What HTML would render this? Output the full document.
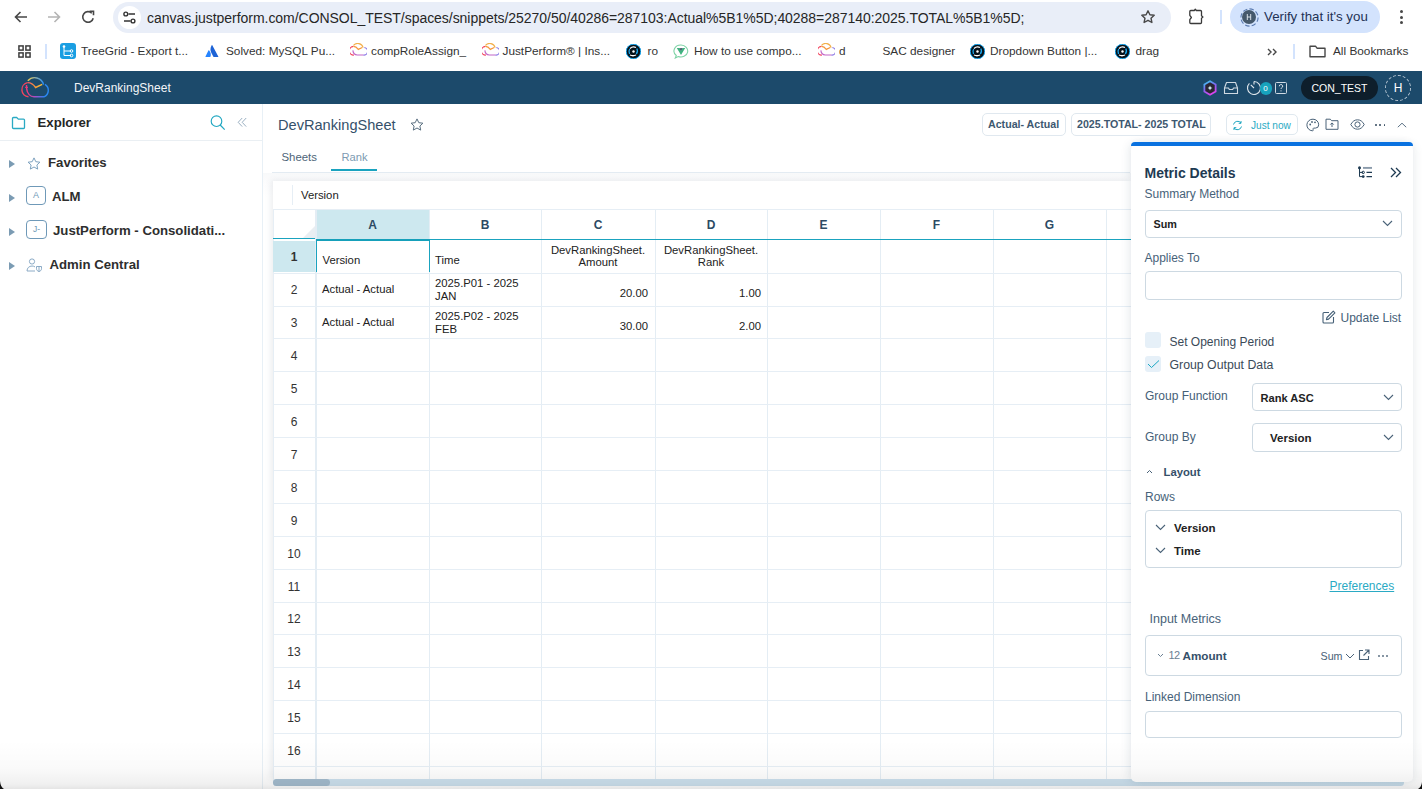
<!DOCTYPE html>
<html><head><meta charset="utf-8">
<style>
*{box-sizing:border-box;margin:0;padding:0}
html,body{width:1422px;height:789px;overflow:hidden;background:#fff;font-family:"Liberation Sans",sans-serif;color:#222}
.a{position:absolute;white-space:nowrap}
#chrome{position:absolute;left:0;top:0;width:1422px;height:71px;background:#fff}
#url{position:absolute;left:113px;top:1.5px;width:1058px;height:31px;border-radius:16px;background:#e9eef8}
#urltxt{left:147px;top:9.5px;font-size:14px;color:#262626;letter-spacing:-0.04px}
.bm{font-size:11.8px;color:#333;top:43.8px}
#hdr{position:absolute;left:0;top:71px;width:1422px;height:33px;background:#1c4a6b}
#side{position:absolute;left:0;top:104px;width:263px;height:685px;background:#fff;border-right:1px solid #e8f0f6}
.tri{position:absolute;width:0;height:0;border-top:4.8px solid transparent;border-bottom:4.8px solid transparent;border-left:6.3px solid #7b9bb3}
.tree{font-size:13.2px;font-weight:700;color:#2e2e2e}
#main{position:absolute;left:263px;top:104px;width:1159px;height:685px;background:#fff}
#grid{position:absolute;left:273px;top:181px;width:858px;height:600px;background:#fff}
.gtxt{font-size:11.3px;color:#222}
.colh{position:absolute;top:211px;height:29px;font-size:12px;font-weight:700;color:#2d4a64;text-align:center;line-height:29px}
.rowh{position:absolute;left:273px;width:42px;font-size:12px;color:#333;text-align:center}
#panel{position:absolute;left:1130.5px;top:142px;width:282px;height:640px;background:#fff;border-radius:8px 8px 5px 5px;box-shadow:-3px 0 8px rgba(30,60,90,0.08), 3px 0 8px rgba(30,60,90,0.06)}
.plab{font-size:12px;color:#476279}
.box{position:absolute;border:1px solid #cdd9e2;border-radius:4px;background:#fff}
.sel{font-size:12.5px;font-weight:700;color:#222}
</style></head><body>
<div id="chrome">
  <svg class="a" style="left:13px;top:9px" width="16" height="16" viewBox="0 0 16 16"><path d="M14 8H2.5M7.5 3L2.5 8l5 5" fill="none" stroke="#474747" stroke-width="1.6"/></svg>
  <svg class="a" style="left:46px;top:9px" width="16" height="16" viewBox="0 0 16 16"><path d="M2 8h11.5M8.5 3l5 5-5 5" fill="none" stroke="#b4b4b4" stroke-width="1.6"/></svg>
  <svg class="a" style="left:80px;top:9px" width="16" height="16" viewBox="0 0 16 16"><path d="M13.2 9.2A5.3 5.3 0 1 1 11.8 4.2" fill="none" stroke="#474747" stroke-width="1.6"/><path d="M9.5 2.2h4v4" fill="none" stroke="#474747" stroke-width="1.6"/></svg>
  <div id="url"></div>
  <div class="a" style="left:117.5px;top:5.5px;width:23px;height:23px;border-radius:12px;background:#fff"></div>
  <svg class="a" style="left:122px;top:10px" width="15" height="15" viewBox="0 0 15 15"><circle cx="3.8" cy="4" r="1.9" fill="none" stroke="#333" stroke-width="1.4"/><path d="M6.5 4H13M2 11h6.5" stroke="#333" stroke-width="1.4"/><circle cx="11" cy="11" r="1.9" fill="none" stroke="#333" stroke-width="1.4"/></svg>
  <div class="a" id="urltxt">canvas.justperform.com/CONSOL_TEST/spaces/snippets/25270/50/40286=287103:Actual%5B1%5D;40288=287140:2025.TOTAL%5B1%5D;</div>
  <svg class="a" style="left:1140px;top:9px" width="16" height="16" viewBox="0 0 16 16"><path d="M8 1.8l1.9 4 4.3.5-3.2 2.9.9 4.3L8 11.3l-3.9 2.2.9-4.3L1.8 6.3l4.3-.5z" fill="none" stroke="#474747" stroke-width="1.4" stroke-linejoin="round"/></svg>
  <svg class="a" style="left:1188px;top:8px" width="18" height="17" viewBox="0 0 18 17"><path d="M2.8 2.5H6.3L7.3 1.2 8.3 2.5h4.2a1 1 0 0 1 1 1v4.3l1.4 1.2-1.4 1.2v4.3a1 1 0 0 1-1 1H2.8a1 1 0 0 1-1-1v-2.8l1.6-2.2-1.6-2.2V3.5a1 1 0 0 1 1-1z" fill="none" stroke="#3a3a3a" stroke-width="1.3" stroke-linejoin="round"/></svg>
  <div class="a" style="left:1220px;top:9.5px;width:2px;height:14.5px;background:#d3e3fd"></div>
  <div class="a" style="left:1230px;top:1px;width:150px;height:32px;border-radius:16px;background:#d3e3fd"></div>
  <svg class="a" style="left:1239.5px;top:7.5px" width="19" height="19" viewBox="0 0 19 19"><circle cx="9.5" cy="9.5" r="8.6" fill="none" stroke="#5b7bb0" stroke-width="1.1" stroke-dasharray="4.5 2.2"/></svg>
  <div class="a" style="left:1242.3px;top:10.3px;width:13.4px;height:13.4px;border-radius:7px;background:#46596b;"></div>
  <svg class="a" style="left:1242.3px;top:10.3px" width="14" height="14" viewBox="0 0 14 14"><path d="M5.3 4v6M8.7 4v6M5.3 7h3.4" stroke="#e8eef4" stroke-width="0.9"/></svg>
  <div class="a" style="left:1264px;top:9px;font-size:13.3px;color:#1f3255">Verify that it's you</div>
  <div class="a" style="left:1399.5px;top:10px;width:3px;height:3px;border-radius:2px;background:#474747"></div>
  <div class="a" style="left:1399.5px;top:15.5px;width:3px;height:3px;border-radius:2px;background:#474747"></div>
  <div class="a" style="left:1399.5px;top:21px;width:3px;height:3px;border-radius:2px;background:#474747"></div>
  <!-- bookmarks -->
  <svg class="a" style="left:18px;top:45px" width="13" height="13" viewBox="0 0 14 14"><g fill="none" stroke="#3c3c3c" stroke-width="1.6"><rect x="1" y="1" width="4.5" height="4.5"/><rect x="8.5" y="1" width="4.5" height="4.5"/><rect x="1" y="8.5" width="4.5" height="4.5"/><rect x="8.5" y="8.5" width="4.5" height="4.5"/></g></svg>
  <div class="a" style="left:45px;top:44px;width:2px;height:15px;background:#d3e3fd"></div>
  <svg class="a" style="left:59.5px;top:43px" width="16" height="16" viewBox="0 0 16 16"><rect width="16" height="16" rx="3" fill="#1a9ee2"/><path d="M4 3.5v9h7M4 8h7" fill="none" stroke="#fff" stroke-width="1"/><circle cx="4" cy="3.5" r="1.3" fill="#fff"/><circle cx="11.5" cy="8" r="1.3" fill="none" stroke="#fff"/><circle cx="11.5" cy="12.5" r="1.3" fill="none" stroke="#fff"/></svg>
  <div class="a bm" style="left:81px">TreeGrid - Export t...</div>
  <svg class="a" style="left:205px;top:44px" width="14" height="14" viewBox="0 0 14 14"><path d="M4.2 6.5c-.3-.3-.6-.3-.8.1L.5 12.5c-.2.3 0 .6.3.6h4.1c.2 0 .4-.1.5-.3.9-1.9.4-4.7-1.2-6.3z" fill="#2684ff"/><path d="M6.7 1.2c-1.6 2.6-1.5 5.4-.4 7.6l2.1 4c.1.2.3.3.5.3h4.1c.3 0 .5-.3.3-.6L7.3 1.2c-.1-.3-.5-.3-.6 0z" fill="#1d63d6"/></svg>
  <div class="a bm" style="left:226px">Solved: MySQL Pu...</div>
  <svg class="a cloud" style="left:349.5px;top:43px" width="17" height="14" viewBox="6 4 28 21"><path d="M12.5 22.8A7 7 0 0 1 11.5 8.6" fill="none" stroke="#f2445e" stroke-width="1.9"/><path d="M11.5 8.6C15 8.5 17.6 10.6 19.6 13.5L26.2 10.3" fill="none" stroke="#f5963a" stroke-width="1.9"/><path d="M11.8 6.8A9.2 9.2 0 0 1 27.6 10.6" fill="none" stroke="#f2b04c" stroke-width="1.9"/><path d="M29.6 10.4A6.2 6.2 0 0 1 28 22.8" fill="none" stroke="#8a7ae6" stroke-width="1.9"/><path d="M28.2 22.8H18C14.2 22.8 11.2 19.5 10.7 15.2" fill="none" stroke="#c266c8" stroke-width="1.9"/></svg>
  <div class="a bm" style="left:371px">compRoleAssign_</div>
  <svg class="a cloud" style="left:481.5px;top:43px" width="17" height="14" viewBox="6 4 28 21"><path d="M12.5 22.8A7 7 0 0 1 11.5 8.6" fill="none" stroke="#f2445e" stroke-width="1.9"/><path d="M11.5 8.6C15 8.5 17.6 10.6 19.6 13.5L26.2 10.3" fill="none" stroke="#f5963a" stroke-width="1.9"/><path d="M11.8 6.8A9.2 9.2 0 0 1 27.6 10.6" fill="none" stroke="#f2b04c" stroke-width="1.9"/><path d="M29.6 10.4A6.2 6.2 0 0 1 28 22.8" fill="none" stroke="#8a7ae6" stroke-width="1.9"/><path d="M28.2 22.8H18C14.2 22.8 11.2 19.5 10.7 15.2" fill="none" stroke="#c266c8" stroke-width="1.9"/></svg>
  <div class="a bm" style="left:502.5px">JustPerform® | Ins...</div>
  <svg class="a" style="left:626px;top:44px" width="15" height="15" viewBox="0 0 15 15"><circle cx="7.5" cy="7.5" r="7.3" fill="#06121a" stroke="#1aa8f0" stroke-width="1"/><g fill="none" stroke-width="1.3"><path d="M4 4.5c1.5-1.5 4-2 6-1" stroke="#fff"/><path d="M10.8 4.5c1 2 .8 4-.5 5.5" stroke="#1aa8f0"/><path d="M10 11c-2 1-4 1-6 0" stroke="#fff"/><path d="M3.5 10c-1-2-.8-3.5.2-5" stroke="#1aa8f0"/></g><circle cx="7.5" cy="7.5" r="1.2" fill="#fff"/></svg>
  <div class="a bm" style="left:647.5px">ro</div>
  <svg class="a" style="left:672.5px;top:43.5px" width="16" height="15" viewBox="0 0 16 15"><path d="M8 1a6.8 6 0 1 1-2.8 11.5L2.3 14l1-2.5A6.8 6 0 0 1 8 1z" fill="#fff" stroke="#7fd3a6" stroke-width="1.1"/><path d="M3.8 4h2.6L8 6.8 9.6 4h2.6L8 11z" fill="#3fb37f"/><path d="M6.4 4h1.2L8 5l.4-1h1.2L8 7z" fill="#34495e"/></svg>
  <div class="a bm" style="left:694px">How to use compo...</div>
  <svg class="a cloud" style="left:817.5px;top:43px" width="17" height="14" viewBox="6 4 28 21"><path d="M12.5 22.8A7 7 0 0 1 11.5 8.6" fill="none" stroke="#f2445e" stroke-width="1.9"/><path d="M11.5 8.6C15 8.5 17.6 10.6 19.6 13.5L26.2 10.3" fill="none" stroke="#f5963a" stroke-width="1.9"/><path d="M11.8 6.8A9.2 9.2 0 0 1 27.6 10.6" fill="none" stroke="#f2b04c" stroke-width="1.9"/><path d="M29.6 10.4A6.2 6.2 0 0 1 28 22.8" fill="none" stroke="#8a7ae6" stroke-width="1.9"/><path d="M28.2 22.8H18C14.2 22.8 11.2 19.5 10.7 15.2" fill="none" stroke="#c266c8" stroke-width="1.9"/></svg>
  <div class="a bm" style="left:839px">d</div>
  <div class="a bm" style="left:882.5px">SAC designer</div>
  <svg class="a" style="left:970px;top:44px" width="15" height="15" viewBox="0 0 15 15"><circle cx="7.5" cy="7.5" r="7.3" fill="#06121a" stroke="#1aa8f0" stroke-width="1"/><g fill="none" stroke-width="1.3"><path d="M4 4.5c1.5-1.5 4-2 6-1" stroke="#fff"/><path d="M10.8 4.5c1 2 .8 4-.5 5.5" stroke="#1aa8f0"/><path d="M10 11c-2 1-4 1-6 0" stroke="#fff"/><path d="M3.5 10c-1-2-.8-3.5.2-5" stroke="#1aa8f0"/></g><circle cx="7.5" cy="7.5" r="1.2" fill="#fff"/></svg>
  <div class="a bm" style="left:990px">Dropdown Button |...</div>
  <svg class="a" style="left:1114.5px;top:44px" width="15" height="15" viewBox="0 0 15 15"><circle cx="7.5" cy="7.5" r="7.3" fill="#06121a" stroke="#1aa8f0" stroke-width="1"/><g fill="none" stroke-width="1.3"><path d="M4 4.5c1.5-1.5 4-2 6-1" stroke="#fff"/><path d="M10.8 4.5c1 2 .8 4-.5 5.5" stroke="#1aa8f0"/><path d="M10 11c-2 1-4 1-6 0" stroke="#fff"/><path d="M3.5 10c-1-2-.8-3.5.2-5" stroke="#1aa8f0"/></g><circle cx="7.5" cy="7.5" r="1.2" fill="#fff"/></svg>
  <div class="a bm" style="left:1135.5px">drag</div>
  <svg class="a" style="left:1267px;top:48px" width="11" height="8" viewBox="0 0 11 8"><path d="M1 1l3 3-3 3M6 1l3 3-3 3" fill="none" stroke="#474747" stroke-width="1.4"/></svg>
  <div class="a" style="left:1293px;top:44px;width:2px;height:14.5px;background:#d3e3fd"></div>
  <svg class="a" style="left:1309px;top:45px" width="17" height="13" viewBox="0 0 17 13"><path d="M1 1.2h5.5l1.5 2h8v8.6H1z" fill="none" stroke="#474747" stroke-width="1.4" stroke-linejoin="round"/></svg>
  <div class="a bm" style="left:1333px">All Bookmarks</div>
</div>
<div id="hdr">
  <svg class="a" style="left:16px;top:3px" width="38" height="26" viewBox="0 0 38 26">
    <defs><linearGradient id="lgt" x1="0" y1="0" x2="1" y2="0"><stop offset="0" stop-color="#f2c94c"/><stop offset="0.5" stop-color="#8fb0a8"/><stop offset="1" stop-color="#2a8cf2"/></linearGradient>
    <linearGradient id="lgb" x1="0" y1="0" x2="1" y2="0"><stop offset="0" stop-color="#f03a78"/><stop offset="0.5" stop-color="#a450c8"/><stop offset="1" stop-color="#2f80f0"/></linearGradient>
    <linearGradient id="lgo" x1="0" y1="0" x2="1" y2="0"><stop offset="0" stop-color="#f2546a"/><stop offset="0.5" stop-color="#f5963a"/><stop offset="1" stop-color="#f6c03a"/></linearGradient></defs>
    <path d="M12.5 22.8A7.2 7.2 0 0 1 11.5 8.6" fill="none" stroke="#f2445e" stroke-width="1.4"/>
    <path d="M11.5 8.6C15 8.5 17.6 10.6 19.6 13.5L26.2 10.3" fill="none" stroke="url(#lgo)" stroke-width="1.4"/>
    <path d="M11.8 6.8A9.2 9.2 0 0 1 27.6 10.6" fill="none" stroke="url(#lgt)" stroke-width="1.4"/>
    <path d="M29 10.4A7 7 0 0 1 28 22.8" fill="none" stroke="#2a88f2" stroke-width="1.4"/>
    <path d="M28.2 22.8H18C14.2 22.8 11.2 19.5 10.7 15.2L10.5 11" fill="none" stroke="url(#lgb)" stroke-width="1.4"/>
    <path d="M9.2 13.4h2.7" stroke="#f03a78" stroke-width="1.2"/>
  </svg>
  <div class="a" style="left:74px;top:10px;font-size:12px;color:#f2f5f8">DevRankingSheet</div>
  <svg class="a" style="left:1202.5px;top:8.5px" width="14" height="16" viewBox="0 0 14 16"><defs><linearGradient id="hx" x1="0" y1="0" x2="0.4" y2="1"><stop offset="0" stop-color="#38d2f2"/><stop offset="0.5" stop-color="#7a6af0"/><stop offset="1" stop-color="#d844ee"/></linearGradient></defs><path d="M7 1.2l5.6 3.2v7.2L7 14.8l-5.6-3.2V4.4z" fill="#2b2631" stroke="url(#hx)" stroke-width="1.8"/><path d="M7 5.6l.7 1.7 1.7.7-1.7.7L7 10.4l-.7-1.7-1.7-.7 1.7-.7z" fill="#d8f6fb"/></svg>
  <svg class="a" style="left:1223px;top:10px" width="16" height="14" viewBox="0 0 16 14"><path d="M1.5 7l2-5.5h9L14.5 7v5.5h-13z M1.5 7h4l.8 1.5h3.4l.8-1.5h4" fill="none" stroke="#cfd9e2" stroke-width="1.1" stroke-linejoin="round"/></svg>
  <svg class="a" style="left:1245px;top:8px" width="18" height="18" viewBox="0 0 18 18"><path d="M9 2.5a6.5 6.5 0 1 1-4.6 1.9" fill="none" stroke="#dfe6ec" stroke-width="1.1"/><path d="M9 2.5v3M9 9L5.8 5.8" stroke="#dfe6ec" stroke-width="1.1"/></svg>
  <div class="a" style="left:1259.5px;top:11px;width:12px;height:13px;border-radius:7px;background:#17a3bd;color:#fff;font-size:8px;text-align:center;line-height:13px">0</div>
  <svg class="a" style="left:1275px;top:11px" width="12" height="12" viewBox="0 0 12 12"><rect x="0.5" y="0.5" width="11" height="11" rx="1" fill="none" stroke="#cfd9e2" stroke-width="1"/><path d="M4.3 4.3a1.7 1.7 0 1 1 2.4 1.5c-.6.3-.7.6-.7 1.2" fill="none" stroke="#dfe6ec" stroke-width="1"/><circle cx="6" cy="8.8" r=".6" fill="#dfe6ec"/></svg>
  <div class="a" style="left:1301px;top:5px;width:77px;height:24px;border-radius:12px;background:#0e1e2b;color:#fff;font-size:10.5px;text-align:center;line-height:24px">CON_TEST</div>
  <div class="a" style="left:1385px;top:4px;width:26px;height:26px;border-radius:13px;border:1px dashed #b7c6d3;color:#fff;font-size:12px;text-align:center;line-height:24px">H</div>
</div>
<div id="side">
  <svg class="a" style="left:11px;top:12px" width="15" height="14" viewBox="0 0 15 14"><path d="M1.5 2.5a1 1 0 0 1 1-1h3.2l1.6 1.6h5.2a1 1 0 0 1 1 1v7.4a1 1 0 0 1-1 1H2.5a1 1 0 0 1-1-1z" fill="none" stroke="#2aaac4" stroke-width="1.3" stroke-linejoin="round"/></svg>
  <div class="a" style="left:37.5px;top:10.5px;font-size:13.2px;font-weight:700;color:#262626">Explorer</div>
  <svg class="a" style="left:209px;top:11px" width="18" height="18" viewBox="0 0 18 18"><circle cx="7.5" cy="6.2" r="5.3" fill="none" stroke="#22a8c2" stroke-width="1.15"/><path d="M11.2 10l4.5 4.7" stroke="#22a8c2" stroke-width="1.2"/></svg>
  <svg class="a" style="left:236px;top:13px" width="12" height="11" viewBox="0 0 12 11"><path d="M6.2 1L2.2 5.3l4 4.3M10.2 1l-4 4.3 4 4.3" fill="none" stroke="#8ea6ba" stroke-width="0.9"/></svg>
  <div style="position:absolute;left:0;top:36px;width:262px;height:1px;background:#eaeff3"></div>
  <div class="tri" style="left:9px;top:55.5px"></div>
  <svg class="a" style="left:26.5px;top:52.5px" width="14" height="13" viewBox="0 0 14 13"><path d="M7 .9l1.8 3.8 4.1.5-3 2.8.8 4.1L7 10l-3.7 2.1.8-4.1-3-2.8 4.1-.5z" fill="none" stroke="#6f97b8" stroke-width="0.9" stroke-linejoin="round"/></svg>
  <div class="a tree" style="left:48px;top:50.5px">Favorites</div>
  <div class="tri" style="left:9px;top:89.5px"></div>
  <div class="a" style="left:26px;top:82px;width:20px;height:19px;border:1px solid #6f99b8;border-radius:4px;font-size:9px;color:#6f99b8;text-align:center;line-height:17px">A</div>
  <div class="a tree" style="left:52px;top:84.5px">ALM</div>
  <div class="tri" style="left:9px;top:123.5px"></div>
  <div class="a" style="left:26px;top:116px;width:21px;height:19px;border:1px solid #6f99b8;border-radius:4px;font-size:8.5px;color:#6f99b8;text-align:center;line-height:17px">J-</div>
  <div class="a tree" style="left:53px;top:118.5px">JustPerform - Consolidati...</div>
  <div class="tri" style="left:9px;top:157.5px"></div>
  <svg class="a" style="left:26px;top:154px" width="17" height="14" viewBox="0 0 17 14"><circle cx="6" cy="3.5" r="2.6" fill="none" stroke="#7fa2bf" stroke-width="0.9"/><path d="M1 13c0-3 2.2-5 5-5 1.2 0 2.2.3 3 .9M1 13h8" fill="none" stroke="#7fa2bf" stroke-width="0.9"/><path d="M10.5 8.5h5v2.2c0 1.5-1.2 2.6-2.5 2.8-1.3-.2-2.5-1.3-2.5-2.8z M13 8.5v5" fill="none" stroke="#7fa2bf" stroke-width="0.9"/></svg>
  <div class="a tree" style="left:49.5px;top:152.5px">Admin Central</div>
</div>
<div id="main">
  <div class="a" style="left:15px;top:13px;font-size:14.6px;color:#35506a">DevRankingSheet</div>
  <svg class="a" style="left:147px;top:14px" width="14" height="13" viewBox="0 0 14 13"><path d="M7 .9l1.8 3.8 4.1.5-3 2.8.8 4.1L7 10l-3.7 2.1.8-4.1-3-2.8 4.1-.5z" fill="none" stroke="#5a6f80" stroke-width="1" stroke-linejoin="round"/></svg>
  <div class="a" style="left:18.5px;top:46.5px;font-size:11.4px;color:#4d6478">Sheets</div>
  <div class="a" style="left:78.5px;top:46.5px;font-size:11.2px;color:#7d9bb2">Rank</div>
  <div class="a" style="left:9px;top:67.5px;width:858px;height:1.5px;background:#e3ebf2"></div>
  <div class="a" style="left:68px;top:65px;width:46px;height:2px;background:#1aa3bf"></div>
  <div class="a" style="left:0;top:69px;width:868px;height:616px;background:linear-gradient(#f8f9fa,#fcfcfd 10px,#fff 24px)"></div>
  <div class="a" style="left:719px;top:9px;width:84px;height:23px;border:1px solid #e0e8ef;border-radius:5px;font-size:10.65px;font-weight:700;color:#3d5870;line-height:21px;padding-left:5px">Actual- Actual</div>
  <div class="a" style="left:808px;top:9px;width:140px;height:23px;border:1px solid #e0e8ef;border-radius:5px;font-size:10.65px;font-weight:700;color:#3d5870;line-height:21px;padding-left:5px">2025.TOTAL- 2025 TOTAL</div>
  <div class="a" style="left:963px;top:10px;width:71.5px;height:21px;border:1px solid #dfe8ef;border-radius:5px"></div>
  <svg class="a" style="left:969px;top:16px;transform:scaleX(-1)" width="11" height="11" viewBox="0 0 11 11"><path d="M9.5 4.5A4.2 4.2 0 0 0 2 3M1.5 6.5A4.2 4.2 0 0 0 9 8" fill="none" stroke="#1fa6c0" stroke-width="1"/><path d="M2 1v2.3h2.3M9 10V7.7H6.7" fill="none" stroke="#1fa6c0" stroke-width="1"/></svg>
  <div class="a" style="left:988px;top:15.5px;font-size:10.1px;color:#2aaac4">Just now</div>
  <svg class="a" style="left:1043px;top:14px" width="14" height="14" viewBox="0 0 14 14"><path d="M7 1.2a5.8 5.8 0 0 0-.6 11.6c.9 0 1.1-.7.7-1.3-.4-.6 0-1.4.8-1.4h1.5a3.3 3.3 0 0 0 3.3-3.3C12.7 3.7 10.2 1.2 7 1.2z" fill="none" stroke="#4a6278" stroke-width="1"/><circle cx="4.2" cy="6.5" r=".9" fill="#4a6278"/><circle cx="6" cy="4" r=".9" fill="#4a6278"/><circle cx="9" cy="4.3" r=".9" fill="#4a6278"/></svg>
  <svg class="a" style="left:1062px;top:14px" width="14" height="12" viewBox="0 0 14 12"><path d="M1 1.2h4.3l1.3 1.5H13v8.6H1z" fill="none" stroke="#4a6278" stroke-width="1"/><path d="M7 9V5M5.3 6.6L7 4.9l1.7 1.7" fill="none" stroke="#4a6278" stroke-width="1"/></svg>
  <svg class="a" style="left:1087px;top:15px" width="15" height="11" viewBox="0 0 15 11"><path d="M.8 5.5C2.5 2.3 4.8.8 7.5.8s5 1.5 6.7 4.7c-1.7 3.2-4 4.7-6.7 4.7S2.5 8.7.8 5.5z" fill="none" stroke="#4a6278" stroke-width="1"/><circle cx="7.5" cy="5.5" r="2.6" fill="none" stroke="#4a6278" stroke-width="1"/></svg>
  <div class="a" style="left:1112px;top:20.3px;width:1.8px;height:1.8px;background:#33495e;border-radius:1px"></div>
  <div class="a" style="left:1116.3px;top:20.3px;width:1.8px;height:1.8px;background:#33495e;border-radius:1px"></div>
  <div class="a" style="left:1120.6px;top:20.3px;width:1.8px;height:1.8px;background:#33495e;border-radius:1px"></div>
  <svg class="a" style="left:1133.5px;top:17.5px" width="10" height="6" viewBox="0 0 10 6"><path d="M.8 5.2L5 1.2l4.2 4" fill="none" stroke="#4a6278" stroke-width="0.9"/></svg>
</div>
<div id="grid" style="box-shadow:-2px -1px 6px rgba(60,80,100,0.10)"></div>
<div class="a" style="left:292px;top:185px;width:1px;height:20px;background:#e6eef5"></div>
<div class="a" style="left:273px;top:210px;width:1px;height:571px;background:#e6eef5"></div>
<div class="a gtxt" style="left:301px;top:189px">Version</div>
<div class="a" style="left:273px;top:209px;width:858px;height:1px;background:#e6eef5"></div>
<div class="a" style="left:316px;top:210px;width:113px;height:29px;background:#cde8ef"></div>
<div class="a" style="left:273px;top:241px;width:42px;height:31px;background:#cde8ef"></div>
<svg class="a" style="left:302px;top:226px" width="13" height="13" viewBox="0 0 13 13"><path d="M13 0V13H0z" fill="#e9eef2"/></svg>
<div class="a" style="left:315px;top:210px;width:2px;height:571px;background:#e4edf4"></div>
<div class="a" style="left:429px;top:210px;width:1px;height:571px;background:#e4edf4"></div>
<div class="a" style="left:541px;top:210px;width:1px;height:571px;background:#e4edf4"></div>
<div class="a" style="left:655px;top:210px;width:1px;height:571px;background:#e4edf4"></div>
<div class="a" style="left:767px;top:210px;width:1px;height:571px;background:#e4edf4"></div>
<div class="a" style="left:880px;top:210px;width:1px;height:571px;background:#e4edf4"></div>
<div class="a" style="left:993px;top:210px;width:1px;height:571px;background:#e4edf4"></div>
<div class="a" style="left:1106px;top:210px;width:1px;height:571px;background:#e4edf4"></div>
<div class="a" style="left:273px;top:273px;width:858px;height:1px;background:#e6eef5"></div>
<div class="a" style="left:273px;top:306px;width:858px;height:1px;background:#e6eef5"></div>
<div class="a" style="left:273px;top:338px;width:858px;height:1px;background:#e6eef5"></div>
<div class="a" style="left:273px;top:371px;width:858px;height:1px;background:#e6eef5"></div>
<div class="a" style="left:273px;top:404px;width:858px;height:1px;background:#e6eef5"></div>
<div class="a" style="left:273px;top:437px;width:858px;height:1px;background:#e6eef5"></div>
<div class="a" style="left:273px;top:470px;width:858px;height:1px;background:#e6eef5"></div>
<div class="a" style="left:273px;top:503px;width:858px;height:1px;background:#e6eef5"></div>
<div class="a" style="left:273px;top:536px;width:858px;height:1px;background:#e6eef5"></div>
<div class="a" style="left:273px;top:569px;width:858px;height:1px;background:#e6eef5"></div>
<div class="a" style="left:273px;top:602px;width:858px;height:1px;background:#e6eef5"></div>
<div class="a" style="left:273px;top:634px;width:858px;height:1px;background:#e6eef5"></div>
<div class="a" style="left:273px;top:667px;width:858px;height:1px;background:#e6eef5"></div>
<div class="a" style="left:273px;top:700px;width:858px;height:1px;background:#e6eef5"></div>
<div class="a" style="left:273px;top:733px;width:858px;height:1px;background:#e6eef5"></div>
<div class="a" style="left:273px;top:766px;width:858px;height:1px;background:#e6eef5"></div>
<div class="rowh" style="top:241px;height:33px;line-height:33px;font-weight:700;">1</div>
<div class="rowh" style="top:274px;height:32px;line-height:32px;">2</div>
<div class="rowh" style="top:308px;height:31px;line-height:31px;">3</div>
<div class="rowh" style="top:340px;height:32px;line-height:32px;">4</div>
<div class="rowh" style="top:373px;height:32px;line-height:32px;">5</div>
<div class="rowh" style="top:406px;height:32px;line-height:32px;">6</div>
<div class="rowh" style="top:439px;height:32px;line-height:32px;">7</div>
<div class="rowh" style="top:472px;height:32px;line-height:32px;">8</div>
<div class="rowh" style="top:505px;height:32px;line-height:32px;">9</div>
<div class="rowh" style="top:538px;height:32px;line-height:32px;">10</div>
<div class="rowh" style="top:571px;height:32px;line-height:32px;">11</div>
<div class="rowh" style="top:604px;height:31px;line-height:31px;">12</div>
<div class="rowh" style="top:636px;height:32px;line-height:32px;">13</div>
<div class="rowh" style="top:669px;height:32px;line-height:32px;">14</div>
<div class="rowh" style="top:702px;height:32px;line-height:32px;">15</div>
<div class="rowh" style="top:735px;height:32px;line-height:32px;">16</div>
<div class="a" style="left:273px;top:238px;width:42px;height:1px;background:#1aa3bf"></div>
<div class="a" style="left:316px;top:239px;width:815px;height:1.2px;background:#1aa3bf"></div>
<div class="a" style="left:316px;top:239px;width:114px;height:2px;background:#16a0ba"></div>
<div class="a" style="left:316px;top:241px;width:1.2px;height:31px;background:#1aa3bf"></div>
<div class="a" style="left:429px;top:241px;width:1.2px;height:31px;background:#1aa3bf"></div>
<div class="colh" style="left:316px;width:113px">A</div>
<div class="colh" style="left:429px;width:112px">B</div>
<div class="colh" style="left:541px;width:114px">C</div>
<div class="colh" style="left:655px;width:112px">D</div>
<div class="colh" style="left:767px;width:113px">E</div>
<div class="colh" style="left:880px;width:113px">F</div>
<div class="colh" style="left:993px;width:113px">G</div>
<div class="a gtxt" style="left:322.5px;top:254px">Version</div>
<div class="a gtxt" style="left:435px;top:254px">Time</div>
<div class="a gtxt" style="left:541px;top:243.5px;width:114px;text-align:center;line-height:12.7px">DevRankingSheet.<br>Amount</div>
<div class="a gtxt" style="left:655px;top:243.5px;width:112px;text-align:center;line-height:12.7px">DevRankingSheet.<br>Rank</div>
<div class="a gtxt" style="left:322px;top:283px">Actual - Actual</div>
<div class="a gtxt" style="left:435px;top:277px;line-height:12.7px">2025.P01 - 2025<br>JAN</div>
<div class="a gtxt" style="left:541px;top:286.7px;width:107px;text-align:right">20.00</div>
<div class="a gtxt" style="left:655px;top:286.7px;width:106px;text-align:right">1.00</div>
<div class="a gtxt" style="left:322px;top:316px">Actual - Actual</div>
<div class="a gtxt" style="left:435px;top:310px;line-height:12.7px">2025.P02 - 2025<br>FEB</div>
<div class="a gtxt" style="left:541px;top:319.7px;width:107px;text-align:right">30.00</div>
<div class="a gtxt" style="left:655px;top:319.7px;width:106px;text-align:right">2.00</div>
<div class="a" style="left:273px;top:779px;width:1131px;height:7px;border-radius:4px;background:#cde1ee"></div>
<div class="a" style="left:273px;top:779px;width:57px;height:7px;border-radius:4px;background:#a4bcce"></div>
<div id="panel">
  <div class="a" style="left:0;top:0;width:282px;height:4px;background:#0a72e0;border-radius:8px 8px 0 0"></div>
</div>
<div class="a" style="left:1144.5px;top:164.5px;font-size:14px;font-weight:700;color:#1e3a52">Metric Details</div>
<svg class="a" style="left:1357px;top:165px" width="16" height="14" viewBox="0 0 16 14"><circle cx="2.5" cy="2.8" r="1.5" fill="#1e3a52"/><path d="M2.5 2.8V11.6H6M2.5 7.4H6" fill="none" stroke="#1e3a52" stroke-width="1"/><circle cx="6.2" cy="7.4" r="1.2" fill="none" stroke="#1e3a52" stroke-width="1"/><circle cx="6.2" cy="11.6" r="1.4" fill="#1e3a52"/><path d="M6 2.9H15" stroke="#8a9aaa" stroke-width="1.9"/><path d="M9.5 7.4H15M9.5 11.6H15" stroke="#1e3a52" stroke-width="1.1"/></svg>
<svg class="a" style="left:1390px;top:167px" width="12" height="11" viewBox="0 0 12 11"><path d="M1 1l4.5 4.5L1 10M6 1l4.5 4.5L6 10" fill="none" stroke="#1e3a52" stroke-width="1.3"/></svg>
<div class="a plab" style="left:1144.5px;top:186.5px">Summary Method</div>
<div class="box" style="left:1144.5px;top:209.5px;width:257px;height:28px"></div>
<div class="a sel" style="left:1153.5px;top:217.5px;font-size:10.8px">Sum</div>
<svg class="a" style="left:1382px;top:220px" width="11" height="7" viewBox="0 0 11 7"><path d="M1 1l4.5 4.5L10 1" fill="none" stroke="#4a6278" stroke-width="1.1"/></svg>
<div class="a plab" style="left:1144.5px;top:250.5px">Applies To</div>
<div class="box" style="left:1144.5px;top:271px;width:257px;height:28.5px"></div>
<svg class="a" style="left:1322px;top:310px" width="14" height="14" viewBox="0 0 14 14"><path d="M7 2.5H2a1 1 0 0 0-1 1V12a1 1 0 0 0 1 1h8.5a1 1 0 0 0 1-1V7" fill="none" stroke="#456077" stroke-width="1.1"/><path d="M11.3 1.2l1.6 1.6-6.3 6.3-2.2.6.6-2.2z" fill="none" stroke="#456077" stroke-width="1.1" stroke-linejoin="round"/></svg>
<div class="a plab" style="left:1340.5px;top:310.5px;color:#456077">Update List</div>
<div class="a" style="left:1145px;top:332px;width:16px;height:16px;border-radius:3px;background:#e6f0f8"></div>
<div class="a plab" style="left:1169.5px;top:335px;color:#3a4a58">Set Opening Period</div>
<div class="a" style="left:1145px;top:356px;width:16px;height:16px;border-radius:3px;background:#e6f0f8"></div>
<svg class="a" style="left:1147px;top:358px" width="13" height="12" viewBox="0 0 13 12"><path d="M1 6l3.5 3.5L12 2.5" fill="none" stroke="#1ba8c4" stroke-width="1"/></svg>
<div class="a plab" style="left:1169.5px;top:358.3px;color:#3a4a58;font-size:12.3px">Group Output Data</div>
<div class="a plab" style="left:1145px;top:389px;color:#456077">Group Function</div>
<div class="box" style="left:1252px;top:383px;width:149.5px;height:28px"></div>
<div class="a sel" style="left:1260.5px;top:392px;font-size:11.1px">Rank ASC</div>
<svg class="a" style="left:1383px;top:394px" width="11" height="7" viewBox="0 0 11 7"><path d="M1 1l4.5 4.5L10 1" fill="none" stroke="#4a6278" stroke-width="1.1"/></svg>
<div class="a plab" style="left:1145px;top:429.5px;color:#456077">Group By</div>
<div class="box" style="left:1252px;top:423px;width:149.5px;height:29px"></div>
<div class="a sel" style="left:1270px;top:432px;font-size:11.5px">Version</div>
<svg class="a" style="left:1383px;top:434px" width="11" height="7" viewBox="0 0 11 7"><path d="M1 1l4.5 4.5L10 1" fill="none" stroke="#4a6278" stroke-width="1.1"/></svg>
<svg class="a" style="left:1146px;top:469px" width="7" height="5" viewBox="0 0 7 5"><path d="M1 4l2.5-2.5L6 4" fill="none" stroke="#4a6278" stroke-width="1"/></svg>
<div class="a" style="left:1163.5px;top:465.7px;font-size:11.3px;font-weight:700;color:#35506a">Layout</div>
<div class="a plab" style="left:1145px;top:489.5px">Rows</div>
<div class="box" style="left:1145px;top:510px;width:256.5px;height:58px"></div>
<svg class="a" style="left:1155px;top:524px" width="11" height="7" viewBox="0 0 11 7"><path d="M1 1l4.5 4.5L10 1" fill="none" stroke="#4a6278" stroke-width="1.1"/></svg>
<div class="a sel" style="left:1174px;top:521.7px;font-size:11.5px">Version</div>
<svg class="a" style="left:1155px;top:547px" width="11" height="7" viewBox="0 0 11 7"><path d="M1 1l4.5 4.5L10 1" fill="none" stroke="#4a6278" stroke-width="1.1"/></svg>
<div class="a sel" style="left:1174px;top:544.7px;font-size:11.5px">Time</div>
<div class="a" style="left:1329.5px;top:578.7px;font-size:12px;color:#2aaac4;text-decoration:underline">Preferences</div>
<div class="a plab" style="left:1149.5px;top:611.5px;font-size:12.5px">Input Metrics</div>
<div class="box" style="left:1145px;top:635px;width:256.5px;height:41px"></div>
<svg class="a" style="left:1156.5px;top:653px" width="7" height="5" viewBox="0 0 7 5"><path d="M1 1l2.5 2.5L6 1" fill="none" stroke="#6c8194" stroke-width="1"/></svg>
<div class="a" style="left:1168.5px;top:649px;font-size:11px;color:#6c8194;letter-spacing:-0.5px">12</div>
<div class="a sel" style="left:1182.5px;top:648.5px;font-size:11.7px;color:#35506a">Amount</div>
<div class="a" style="left:1320.5px;top:650px;font-size:10.7px;color:#4a6278">Sum</div>
<svg class="a" style="left:1345px;top:653px" width="10" height="6" viewBox="0 0 10 6"><path d="M1 1l4 4 4-4" fill="none" stroke="#4a6278" stroke-width="1"/></svg>
<svg class="a" style="left:1357.5px;top:649px" width="12" height="12" viewBox="0 0 12 12"><path d="M5 1.5H1.5v9h9V7M7 1h4v4M11 1L5.5 6.5" fill="none" stroke="#4a6278" stroke-width="1.1"/></svg>
<div class="a" style="left:1378px;top:655.2px;width:2px;height:2px;border-radius:1px;background:#5f7386"></div>
<div class="a" style="left:1382.2px;top:655.2px;width:2px;height:2px;border-radius:1px;background:#5f7386"></div>
<div class="a" style="left:1386.4px;top:655.2px;width:2px;height:2px;border-radius:1px;background:#5f7386"></div>
<div class="a plab" style="left:1145px;top:689.5px">Linked Dimension</div>
<div class="box" style="left:1145px;top:710.5px;width:256.5px;height:27px"></div>
<div class="a" style="left:0;top:740px;width:1422px;height:49px;background:linear-gradient(rgba(0,0,0,0) 0px,rgba(0,0,0,0.02) 28px,rgba(0,0,0,0.06) 44px,rgba(0,0,0,0.1) 49px);pointer-events:none"></div>
<svg class="a" style="left:0;top:775px" width="14" height="14" viewBox="0 0 14 14"><path d="M0 6Q.5 12 4 14H0z" fill="#111"/></svg>
<svg class="a" style="left:1408px;top:775px" width="14" height="14" viewBox="0 0 14 14"><path d="M14 7Q13.5 12 10 14H14z" fill="#111"/></svg>
</body></html>
